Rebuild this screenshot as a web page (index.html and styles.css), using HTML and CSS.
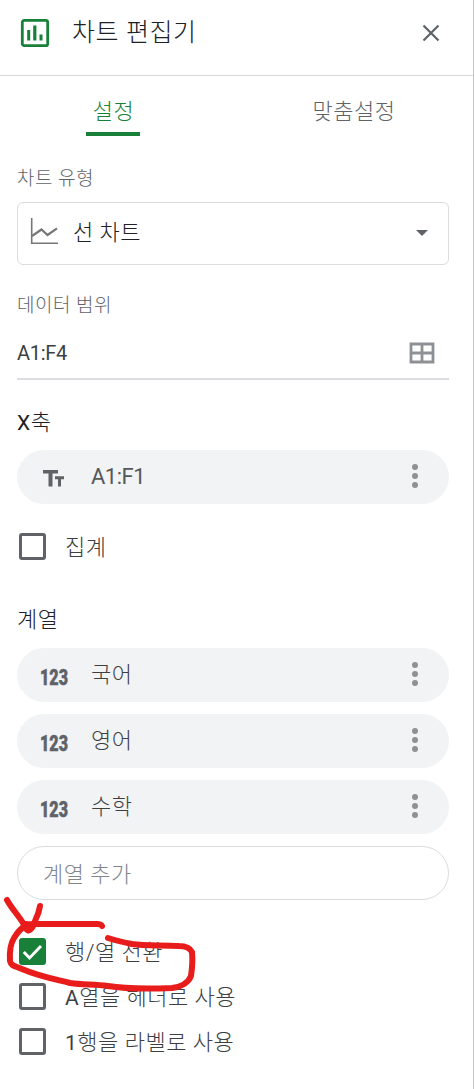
FILE: index.html
```html
<!DOCTYPE html>
<html lang="ko">
<head>
    <meta charset="UTF-8">
    <meta name="viewport" content="width=device-width, initial-scale=1.0">
    <title>차트 편집기</title>
    <link rel="stylesheet" href="styles.css">
</head>
<body>

    <div class="sidebar">
        <div class="header">
            <svg class="chart-icon" width="30" height="30" viewBox="0 0 30 30">
                <rect x="2.3" y="2.3" width="25.4" height="25.4" rx="2" fill="none" stroke="#188038" stroke-width="2.8"/>
                <path d="M7.2 12h3v10.500h-3zM13.2 7.500h3.200v15h-3.200zM19.500 16.500h3v6h-3z" fill="#188038"/>
            </svg>
            <h1>차트 편집기</h1>
            <svg class="close" width="18" height="18" viewBox="0 0 18 18">
                <path d="M1.500 1.500l15 15M16.500 1.500l-15 15" stroke="#5f6368" stroke-width="2.200"/>
            </svg>
        </div>

        <div class="tabs">
            <div class="tab active"><span>설정</span></div>
            <div class="tab"><span>맞춤설정</span></div>
        </div>

        <div class="content">
            <div class="label">차트 유형</div>
            <div class="select">
                <svg width="28" height="28" viewBox="0 0 28 28">
                    <path d="M1.700 1v25.300H28" fill="none" stroke="#777" stroke-width="1.600"/>
                    <path d="M2 19l9.500-6.500 6 5.500 9.500-6.700" fill="none" stroke="#777" stroke-width="2.200"/>
                </svg>
                <span>선 차트</span>
                <div class="arrow"></div>
            </div>

            <div class="label range-label">데이터 범위</div>
            <div class="range">
                <span>A1:F4</span>
                <svg width="26" height="22" viewBox="0 0 26 22">
                    <path d="M2 2h22v18H2zM13 2v18M2 11h22" fill="none" stroke="#8d9196" stroke-width="2.800"/>
                </svg>
            </div>

            <h2 class="x-title"><b class="latin">X</b>축</h2>
            <div class="chip">
                <svg class="type" width="28" height="20" viewBox="0 0 28 20">
                    <path d="M3 1h15v3.500h-5.500v13h-4v-13H3zM15 7.200h9v3h-3v7.300h-3v-7.300h-3z" fill="#5f6368"/>
                </svg>
                <span class="cell">A1:F1</span>
                <div class="dots"><i></i><i></i><i></i></div>
            </div>
            <div class="check aggregate"><i class="box"></i><span>집계</span></div>

            <h2 class="series-title">계열</h2>
            <div class="series">
                <div class="chip">
                    <svg class="type" width="28" height="28" viewBox="0 0 28 28"><text x="0" y="22" textLength="28" lengthAdjust="spacingAndGlyphs">123</text></svg>
                    <span>국어</span>
                    <div class="dots"><i></i><i></i><i></i></div>
                </div>
                <div class="chip">
                    <svg class="type" width="28" height="28" viewBox="0 0 28 28"><text x="0" y="22" textLength="28" lengthAdjust="spacingAndGlyphs">123</text></svg>
                    <span>영어</span>
                    <div class="dots"><i></i><i></i><i></i></div>
                </div>
                <div class="chip">
                    <svg class="type" width="28" height="28" viewBox="0 0 28 28"><text x="0" y="22" textLength="28" lengthAdjust="spacingAndGlyphs">123</text></svg>
                    <span>수학</span>
                    <div class="dots"><i></i><i></i><i></i></div>
                </div>
                <div class="chip add"><span>계열 추가</span></div>
            </div>

            <div class="options">
                <div class="check">
                    <i class="box checked">
                        <svg width="27" height="27" viewBox="0 0 27 27"><path d="M4.800 14l5.700 6L22 8" fill="none" stroke="#fff" stroke-width="2.900"/></svg>
                    </i>
                    <span>행/열 전환</span>
                </div>
                <div class="check"><i class="box"></i><span><b class="latin">A</b>열을 헤더로 사용</span></div>
                <div class="check"><i class="box"></i><span><b class="latin">1</b>행을 라벨로 사용</span></div>
            </div>
        </div>

        <!-- Red pen marks -->
        <svg class="marks" width="210" height="100" viewBox="0 890 210 100">
            <path d="M7 900C12 909 18 915 23 923Q27 932 29 930Q33 929 35 921Q39 913 40 906"/>
            <path d="M26 924l6 1-3 5z"/>
            <path d="M102 926Q101 924 97 924H38C26 923 20 928 14 938Q9 946 10 961C11 966 15 966 22 969C38 976 54 979 70 983C84 985 94 984 108 986C126 989 146 989 172 988Q187 986 191 976Q193 963 192 952Q189 946 179 946C160 945 145 946 132 944Q117 941 108 938"/>
        </svg>
    </div>

</body>
</html>
```
FILE: styles.css
```css
* {
    box-sizing: border-box;
}
body {
    margin: 0;
    background: #fff;
    font-family: Roboto, 'Noto Sans CJK KR', sans-serif;
    font-weight: 300;
    font-size: 22px;
    letter-spacing: 0.5px;
    color: #3c4043;
}
.sidebar {
    position: relative;
    width: 474px;
    height: 1089px;
    overflow: hidden;
    border-right: 1px solid #c8c8c8;
}
svg {
    display: block;
    flex: none;
}
.latin {
    font-size: 21px;
    font-weight: 400;
}
.header {
    display: flex;
    align-items: center;
    height: 76px;
    padding: 0 33px 10px 20px;
    border-bottom: 1px solid #dadada;
}
h1 {
    margin: 0 auto 0 22px;
    font-size: 25px;
    font-weight: 300;
    line-height: 40px;
    letter-spacing: 0.6px;
    color: #202124;
}
.close {
    margin-top: 1px;
}
.tabs {
    display: flex;
    height: 60px;
}
.tab {
    display: flex;
    flex: none;
    justify-content: center;
    width: 226px;
    color: #5f6368;
}
.tab:last-child {
    width: 247px;
    padding-left: 8px;
}
.tab span {
    height: 60px;
    padding: 0 6px 0 7px;
    line-height: 71px;
}
.tab.active {
    color: #188038;
}
.tab.active span {
    background: linear-gradient(#188038, #188038) bottom / 100% 4px no-repeat;
}
.content {
    padding: 26px 24px 0 17px;
}
.label {
    height: 30px;
    padding-top: 2px;
    line-height: 30px;
    font-size: 19px;
    color: #5f6368;
}
.select {
    display: flex;
    align-items: center;
    height: 63px;
    margin-top: 10px;
    padding: 0 20px 5px 12px;
    border: 1px solid #dadce0;
    border-radius: 6px;
    color: #202124;
}
.select span {
    margin-left: 15px;
    padding-bottom: 3px;
}
.arrow {
    margin: 4px 0 0 auto;
    border: 6.5px solid transparent;
    border-top-color: #5f6368;
    border-bottom: 0;
}
.range-label {
    margin-top: 24px;
}
.range {
    display: flex;
    align-items: center;
    justify-content: space-between;
    height: 53px;
    margin-top: 8px;
    padding-right: 14px;
    border-bottom: 2px solid #dadce0;
    font-size: 20px;
    font-weight: 400;
    letter-spacing: -0.3px;
}
h2 {
    height: 34px;
    margin: 0;
    line-height: 36px;
    font-size: 22px;
    font-weight: 300;
    color: #202124;
}
.x-title {
    margin: 25px 0 11px;
}
.chip {
    display: flex;
    align-items: center;
    height: 54px;
    padding: 0 31px 0 23px;
    border-radius: 27px;
    background: #f1f3f4;
}
.chip span {
    margin-left: 23px;
    padding-bottom: 7px;
}
.chip .cell {
    padding-bottom: 1px;
    font-size: 22px;
    font-weight: 400;
    letter-spacing: -0.5px;
    color: #55585b;
}
.type {
    margin-top: 3px;
    overflow: visible;
}
.type text {
    font: 900 22px Roboto, sans-serif;
    letter-spacing: 0;
    fill: #5f6368;
    stroke: #5f6368;
    stroke-width: 0.5;
}
.dots {
    display: flex;
    flex-direction: column;
    gap: 3px;
    margin: 0 0 2px auto;
}
.dots i {
    width: 6px;
    height: 6px;
    border-radius: 50%;
    background: #8f9193;
}
.check {
    display: flex;
    align-items: center;
    height: 45px;
    padding-left: 2px;
}
.check span {
    margin-left: 19px;
    padding-bottom: 4px;
}
.box {
    width: 27px;
    height: 27px;
    border: 3px solid #5f6368;
    border-radius: 3px;
}
.box.checked {
    border: 0;
    background: #188038;
}
.aggregate {
    margin-top: 20px;
}
.series-title {
    margin: 33px 0 12px;
}
.series {
    display: flex;
    flex-direction: column;
    gap: 12px;
}
.add {
    padding-left: 25px;
    border: 1px solid #dadce0;
    background: #fff;
    color: #80868b;
}
.chip.add span {
    margin-left: 0;
    padding-bottom: 2px;
}
.options {
    margin-top: 29px;
}
.marks {
    position: absolute;
    left: 0;
    top: 890px;
    overflow: visible;
}
.marks path {
    fill: none;
    stroke: #e91c1c;
    stroke-width: 6;
    stroke-linecap: round;
    stroke-linejoin: round;
}
```
